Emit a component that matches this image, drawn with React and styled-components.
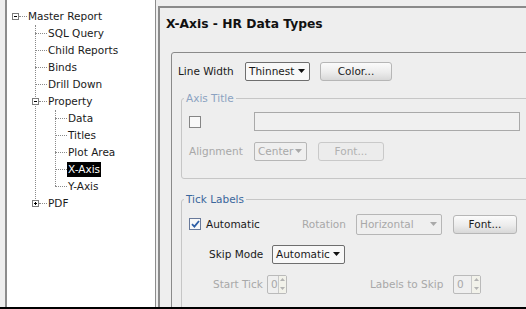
import styled, { createGlobalStyle } from 'styled-components'

const GlobalStyle = createGlobalStyle`
  html, body {
    margin: 0;
    padding: 0;
    background: #eeeeee;
  }
  body {
    font-family: 'DejaVu Sans', 'Liberation Sans', sans-serif;
    font-size: 10.5px;
    color: #1a1a1a;
  }
`

const Screen = styled.div`
  display: flex;
  width: 526px;
  height: 309px;
  box-sizing: border-box;
  border-bottom: 2px solid #000;
  background: #eeeeee;
  overflow: hidden;
`

/* ---------- navigator tree ---------- */

const TreePanel = styled.div`
  flex: none;
  width: 148px;
  margin-left: 5px;
  padding-top: 8px;
  border-left: 2px solid #8c8c8c;
  border-right: 1px solid #8c8c8c;
  background: #fff;
`

const Row = styled.div`
  display: flex;
  align-items: center;
  height: 17px;
  padding-left: ${(p) => p.$level * 20 + 1}px;
`

const Handle = styled.span`
  position: relative;
  flex: none;
  width: 20px;
  height: 17px;

  &::after {
    content: '';
    position: absolute;
    top: 8px;
    left: ${(p) => (p.$box ? 11 : 7)}px;
    right: 1px;
    border-top: 1px dotted #8a8a8a;
  }
`

const Toggle = styled.span`
  position: absolute;
  z-index: 1;
  left: 4px;
  top: 5px;
  width: 5px;
  height: 5px;
  border: 1px solid #7c7c7c;
  background: #fff;

  &::before {
    content: '';
    position: absolute;
    left: 1px;
    right: 1px;
    top: 2px;
    height: 1px;
    background: #000;
  }

  &::after {
    content: '';
    display: ${(p) => (p.$open ? 'none' : 'block')};
    position: absolute;
    top: 1px;
    bottom: 1px;
    left: 2px;
    width: 1px;
    background: #000;
  }
`

const NodeLabel = styled.span`
  margin-left: -1px;
  padding: 0 1px;
  line-height: 15px;
  white-space: nowrap;
  background: ${(p) => (p.$selected ? '#000' : 'transparent')};
  color: ${(p) => (p.$selected ? '#fff' : '#1a1a1a')};
`

const Children = styled.div`
  position: relative;

  &::before {
    content: '';
    position: absolute;
    left: ${(p) => 8 + p.$level * 20}px;
    top: 0;
    bottom: 9px;
    border-left: 1px dotted #8a8a8a;
  }
`

const tree = [
  {
    label: 'Master Report',
    open: true,
    children: [
      { label: 'SQL Query' },
      { label: 'Child Reports' },
      { label: 'Binds' },
      { label: 'Drill Down' },
      {
        label: 'Property',
        open: true,
        children: [
          { label: 'Data' },
          { label: 'Titles' },
          { label: 'Plot Area' },
          { label: 'X-Axis', selected: true },
          { label: 'Y-Axis' },
        ],
      },
      { label: 'PDF', open: false, children: [] },
    ],
  },
]

function TreeNode({ node, level }) {
  const hasBox = !!node.children
  return (
    <>
      <Row $level={level}>
        <Handle $box={hasBox}>{hasBox && <Toggle $open={node.open} />}</Handle>
        <NodeLabel $selected={node.selected}>{node.label}</NodeLabel>
      </Row>
      {node.open && node.children.length > 0 && (
        <Children $level={level + 1}>
          {node.children.map((c) => (
            <TreeNode key={c.label} node={c} level={level + 1} />
          ))}
        </Children>
      )}
    </>
  )
}

/* ---------- property editor ---------- */

const Editor = styled.div`
  flex: 1;
  min-width: 0;
  margin: 6px 0 0 2px;
  border-top: 2px solid #8a8a8a;
  border-left: 2px solid #8a8a8a;
  background: #eeeeee;
  overflow: hidden;
`

const Heading = styled.h1`
  margin: 0;
  height: 44px;
  box-sizing: border-box;
  padding: 8px 0 0 6px;
  font-size: 12.3px;
  line-height: 16px;
  font-weight: bold;
  color: #111;
`

const Sheet = styled.div`
  min-height: 300px;
  margin: 0 -20px 0 11px;
  padding: 8px 0 0 6px;
  border: 1px solid #8a8a8a;
  border-radius: 3px;
`

const FieldRow = styled.div`
  display: flex;
  align-items: center;
  gap: ${(p) => p.$gap || 0}px;
  height: 20px;
  margin-left: ${(p) => p.$indent || 0}px;
`

const Label = styled.span`
  flex: none;
  width: ${(p) => p.$w}px;
  white-space: nowrap;
  color: ${(p) => (p.$disabled ? '#a8a8a8' : '#1a1a1a')};
`

const Group = styled.fieldset`
  min-width: 0;
  margin: ${(p) => p.$top}px 0 0 3px;
  padding: ${(p) => p.$pad};
  border: 1px solid #c6c6c6;
  border-radius: 3px;
`

const Caption = styled.legend`
  margin-left: -5px;
  padding: 0 2px;
  line-height: 14px;
  color: ${(p) => (p.$disabled ? '#8ba2c1' : '#3b679c')};
`

const TitleGrid = styled.div`
  display: grid;
  grid-template-columns: 65px auto;
  row-gap: 10px;
  align-items: center;
`

const Stack = styled.div`
  display: flex;
  flex-direction: column;
  gap: 10px;
`

const Box = styled.span`
  flex: none;
  display: inline-flex;
  align-items: center;
  justify-content: center;
  width: 10px;
  height: 10px;
  border: 1px solid ${(p) => (p.$checked ? '#68799a' : '#858585')};
  background: #f8f8f8;
`

const CheckLabel = styled.span`
  display: flex;
  align-items: center;
  gap: 5px;
  flex: none;
  width: ${(p) => p.$w}px;
`

const TextField = styled.span`
  display: block;
  width: 266px;
  height: 19px;
  box-sizing: border-box;
  border: 1px solid #a9a9a9;
  background: #f0f0f0;
`

const Combo = styled.span`
  flex: none;
  display: inline-flex;
  align-items: center;
  justify-content: space-between;
  width: ${(p) => p.$w}px;
  height: ${(p) => p.$h || 19}px;
  box-sizing: border-box;
  padding: 0 4px 0 3px;
  border: 1px solid ${(p) => (p.$disabled ? '#b6b6b6' : '#6e6e6e')};
  border-radius: 2px;
  background: ${(p) => (p.$disabled ? '#efefef' : '#f8f8f8')};
  color: ${(p) => (p.$disabled ? '#a8a8a8' : '#1a1a1a')};
  white-space: nowrap;
`

const Button = styled.span`
  flex: none;
  display: inline-flex;
  align-items: center;
  justify-content: center;
  width: ${(p) => p.$w}px;
  height: 19px;
  box-sizing: border-box;
  border: 1px solid ${(p) => (p.$disabled ? '#c9c9c9' : '#b6b6b6')};
  border-radius: 3px;
  background: ${(p) =>
    p.$disabled ? '#ececec' : 'linear-gradient(#fbfbfb, #ececec 55%, #d8d8d8)'};
  color: ${(p) => (p.$disabled ? '#b0b0b0' : '#1a1a1a')};
`

const Spinner = styled.span`
  flex: none;
  display: inline-flex;
  width: ${(p) => p.$w}px;
  height: 19px;
  box-sizing: border-box;
  border: 1px solid #bababa;
  border-radius: 2px;
  background: #efefef;
  color: #a8a8a8;
`

const SpinValue = styled.span`
  flex: 1;
  padding-left: 3px;
  line-height: 17px;
`

const SpinArrows = styled.span`
  display: flex;
  flex-direction: column;
  justify-content: space-around;
  align-items: center;
  width: 8px;
  border-left: 1px solid #c8c8c8;
  background: #f2f2ea;
`

function Arrow({ color = '#111' }) {
  return (
    <svg width="7" height="4" viewBox="0 0 7 4">
      <path d="M0 0H7L3.5 4Z" fill={color} />
    </svg>
  )
}

function Tiny({ up }) {
  return (
    <svg width="5" height="3" viewBox="0 0 5 3">
      <path d={up ? 'M0 3H5L2.5 0Z' : 'M0 0H5L2.5 3Z'} fill="#b3b3b3" />
    </svg>
  )
}

function CheckBox({ checked }) {
  return (
    <Box $checked={checked}>
      {checked && (
        <svg width="9" height="8" viewBox="0 0 9 8">
          <path d="M1 4.2L3.4 6.6L8 1" fill="none" stroke="#2f5fa6" strokeWidth="1.8" />
        </svg>
      )}
    </Box>
  )
}

function Spin({ w }) {
  return (
    <Spinner $w={w}>
      <SpinValue>0</SpinValue>
      <SpinArrows>
        <Tiny up />
        <Tiny />
      </SpinArrows>
    </Spinner>
  )
}

export default function App() {
  return (
    <>
      <GlobalStyle />
      <Screen>
        <TreePanel>
          {tree.map((n) => (
            <TreeNode key={n.label} node={n} level={0} />
          ))}
        </TreePanel>

        <Editor>
          <Heading>X-Axis - HR Data Types</Heading>
          <Sheet>
            <FieldRow $gap={10}>
              <Label $w={57}>Line Width</Label>
              <Combo $w={65}>
                Thinnest <Arrow />
              </Combo>
              <Button $w={72}>Color...</Button>
            </FieldRow>

            <Group $top={10} $pad="7px 0 17px 7px">
              <Caption $disabled>Axis Title</Caption>
              <TitleGrid>
                <CheckBox />
                <TextField />
                <Label $w={65} $disabled>
                  Alignment
                </Label>
                <FieldRow $gap={11}>
                  <Combo $w={53} $disabled>
                    Center <Arrow color="#a9a9a9" />
                  </Combo>
                  <Button $w={66} $disabled>
                    Font...
                  </Button>
                </FieldRow>
              </TitleGrid>
            </Group>

            <Group $top={13} $pad="8px 0 20px 7px">
              <Caption>Tick Labels</Caption>
              <Stack>
                <FieldRow>
                  <CheckLabel $w={113}>
                    <CheckBox checked />
                    Automatic
                  </CheckLabel>
                  <Label $w={54} $disabled>
                    Rotation
                  </Label>
                  <Combo $w={86} $h={21} $disabled>
                    Horizontal <Arrow color="#a9a9a9" />
                  </Combo>
                  <Button $w={64} style={{ marginLeft: 11 }}>
                    Font...
                  </Button>
                </FieldRow>
                <FieldRow $indent={20}>
                  <Label $w={63}>Skip Mode</Label>
                  <Combo $w={73}>
                    Automatic <Arrow />
                  </Combo>
                </FieldRow>
                <FieldRow $indent={24}>
                  <Label $w={54} $disabled>
                    Start Tick
                  </Label>
                  <Spin w={20} />
                  <Label $w={83} $disabled style={{ marginLeft: 83 }}>
                    Labels to Skip
                  </Label>
                  <Spin w={28} />
                </FieldRow>
              </Stack>
            </Group>
          </Sheet>
        </Editor>
      </Screen>
    </>
  )
}
